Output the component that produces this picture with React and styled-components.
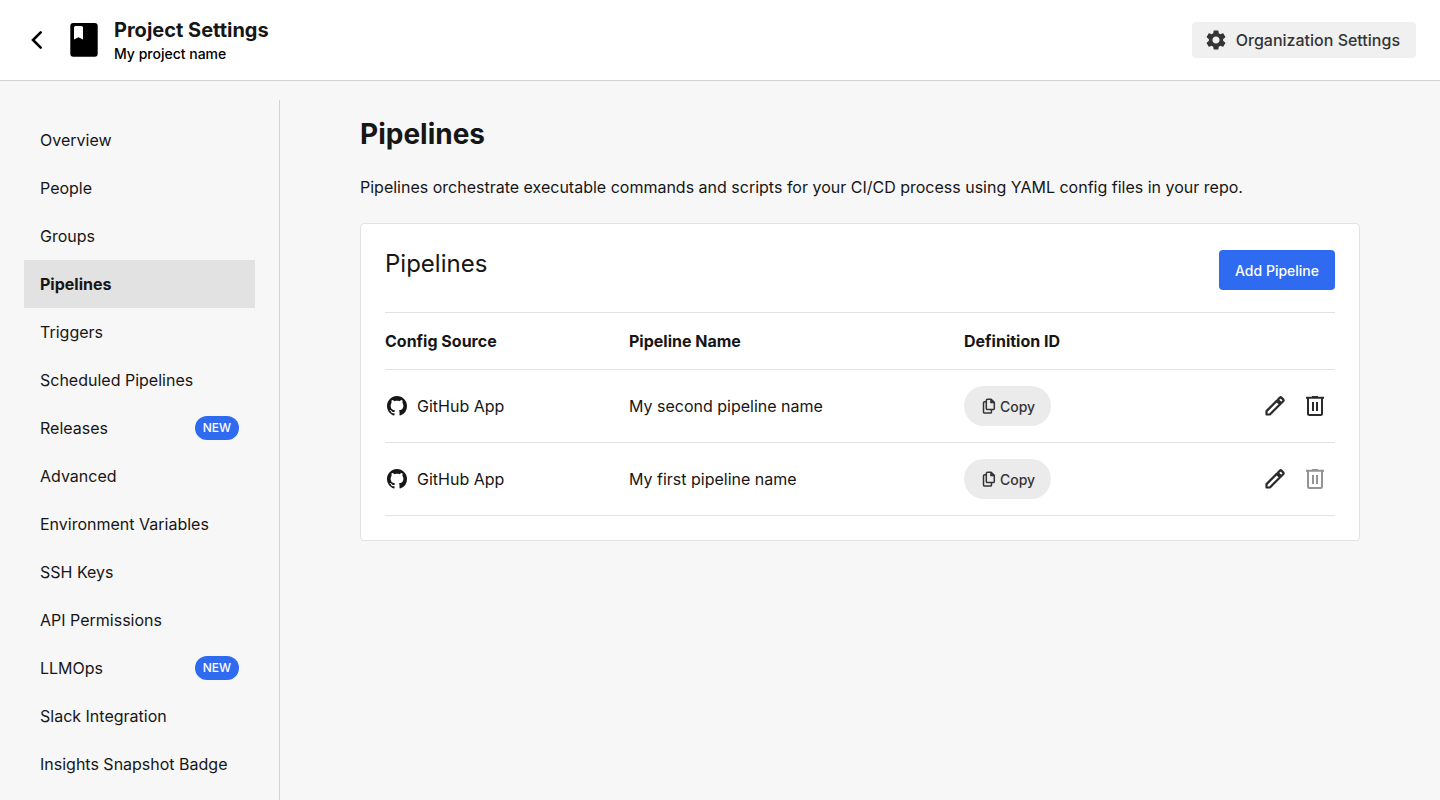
import React from "react";
import styled, { createGlobalStyle } from "styled-components";
import { MdSettings } from "react-icons/md";

const GlobalStyle = createGlobalStyle`
  *, *::before, *::after { box-sizing: border-box; }
  body {
    margin: 0;
    background: #f7f7f7;
    color: #161616;
    font-family: Inter, "Liberation Sans", sans-serif;
    font-size: 16px;
    line-height: 24px;
  }
  h1, h2, p, ul { margin: 0; padding: 0; }
  button { font-family: inherit; border: 0; padding: 0; cursor: pointer; }
  svg { display: block; flex-shrink: 0; }
`;

const Page = styled.div`
  min-height: 100vh;
  display: flex;
  flex-direction: column;
`;

const Header = styled.header`
  display: flex;
  align-items: center;
  min-height: 80px;
  padding: 0 24px;
  background: #fff;
  box-shadow: 0 1px 0 #d2d2d2;
`;

const BackButton = styled.button`
  width: 24px;
  height: 24px;
  margin-right: 16px;
  background: none;
  color: #000;
`;

const ProjectHeading = styled.div`
  display: flex;
  flex: 1;
  align-items: center;
  gap: 10px;
`;

const ProjectText = styled.div`
  padding-top: 4px;
`;

const ProjectTitle = styled.h2`
  font-size: 20px;
  line-height: 24px;
  font-weight: 700;
`;

const ProjectName = styled.p`
  color: #000;
  font-size: 14px;
  line-height: 24px;
  font-weight: 500;
`;

const OrgButton = styled.button`
  display: flex;
  align-items: center;
  gap: 8px;
  height: 36px;
  padding: 0 16px 0 12px;
  border-radius: 4px;
  background: #f0f0f0;
  color: #343434;
  font-size: 16px;
  font-weight: 500;
`;

const Body = styled.div`
  flex: 1;
  display: flex;
`;

const Sidebar = styled.nav`
  flex: 0 0 280px;
  margin-top: 20px;
  padding: 16px 24px 12px;
  border-right: 1px solid #d2d2d2;
`;

const NavList = styled.ul`
  list-style: none;
`;

const NavLink = styled.a`
  display: flex;
  align-items: center;
  justify-content: space-between;
  height: 48px;
  padding: 0 16px;
  background: ${(p) => (p.$active ? "#e2e2e2" : "transparent")};
  color: inherit;
  font-weight: ${(p) => (p.$active ? 700 : 400)};
  text-decoration: none;
`;

const Badge = styled.span`
  padding: 0 8px;
  border-radius: 12px;
  background: #2f6bf0;
  color: #fff;
  font-size: 12px;
  line-height: 24px;
  font-weight: 500;
`;

const Main = styled.main`
  flex: 1;
  min-width: 0;
  padding: 36px 80px;
`;

const PageTitle = styled.h1`
  font-size: 28px;
  line-height: 36px;
  font-weight: 700;
`;

const Description = styled.p`
  margin: 23px 0 24px;
`;

const Card = styled.section`
  padding: 24px;
  border: 1px solid #e2e2e2;
  border-radius: 4px;
  background: #fff;
`;

const CardHeader = styled.div`
  display: flex;
  align-items: flex-start;
  justify-content: space-between;
  padding: 2px 0 22px;
`;

const CardTitle = styled.h2`
  font-size: 24px;
  line-height: 28px;
  font-weight: 400;
`;

const PrimaryButton = styled.button`
  height: 40px;
  padding: 0 16px;
  border-radius: 4px;
  background: #2f6bf0;
  color: #fff;
  font-size: 14px;
  font-weight: 500;
`;

const Table = styled.table`
  width: 100%;
  border-collapse: separate;
  border-spacing: 0;
  table-layout: fixed;
`;

const HeadCell = styled.th`
  width: ${(p) => p.$width || "auto"};
  height: 58px;
  padding: 0;
  border: solid #e2e2e2;
  border-width: 1px 0;
  font-weight: 700;
  text-align: left;
`;

const Cell = styled.td`
  height: 73px;
  padding: 0;
  border-bottom: 1px solid #e2e2e2;
`;

const Source = styled.div`
  display: flex;
  align-items: center;
  gap: 8px;
`;

const CopyButton = styled.button`
  display: flex;
  align-items: center;
  gap: 2px;
  height: 40px;
  padding: 0 16px;
  border-radius: 20px;
  background: #ebebeb;
  color: #343434;
  font-size: 14px;
  font-weight: 500;
`;

const Actions = styled.div`
  display: flex;
  justify-content: flex-end;
  gap: 16px;
  padding-right: 8px;
`;

const IconButton = styled.button`
  width: 24px;
  height: 24px;
  background: none;
  color: #2b2b2b;
  &:disabled { color: #949494; cursor: default; }
`;

const ChevronIcon = () => (
  <svg width="24" height="24" viewBox="0 0 24 24" fill="none" stroke="currentColor" strokeWidth="2.600" strokeLinecap="round" strokeLinejoin="miter">
    <path d="M16.700 4.300 9 12l7.700 7.700" />
  </svg>
);

const BookIcon = () => (
  <svg width="40" height="40" viewBox="0 0 40 40">
    <path fillRule="evenodd" d="M9.300 3h21.400a3 3 0 0 1 3 3v27.700a3 3 0 0 1-3 3H9.300a3 3 0 0 1-3-3V6A3 3 0 0 1 9.300 3zM11.500 6A1.500 1.500 0 0 0 10 7.500v12l4.500-2.200 4.500 2.200v-12A1.500 1.500 0 0 0 17.500 6z" />
  </svg>
);

const GitHubIcon = () => (
  <svg width="24" height="24" viewBox="0 0 24 24" fill="currentColor">
    <path transform="translate(2 2) scale(1.25)" d="M8 0C3.580 0 0 3.580 0 8c0 3.540 2.290 6.530 5.470 7.590.4.070.55-.17.55-.38 0-.19-.01-.82-.01-1.490-2.010.37-2.530-.49-2.690-.94-.09-.23-.48-.94-.82-1.130-.28-.15-.68-.52-.01-.53.63-.01 1.080.58 1.230.82.72 1.210 1.870.87 2.330.66.07-.52.28-.87.51-1.070-1.780-.2-3.640-.89-3.640-3.950 0-.87.31-1.590.82-2.150-.08-.2-.36-1.020.08-2.120 0 0 .67-.21 2.200.82.64-.18 1.320-.27 2-.27s1.360.09 2 .27c1.530-1.040 2.200-.82 2.200-.82.44 1.100.16 1.920.08 2.120.51.56.82 1.270.82 2.150 0 3.070-1.870 3.750-3.650 3.950.29.25.54.73.54 1.480 0 1.070-.01 1.930-.01 2.200 0 .21.15.46.55.38A8.010 8.010 0 0 0 16 8c0-4.420-3.580-8-8-8z" />
  </svg>
);

const CopyIcon = () => (
  <svg width="18" height="18" viewBox="0 0 18 18" fill="none" stroke="currentColor" strokeWidth="1.500" strokeLinejoin="round">
    <path d="M7.500 2.200h3.600L14.300 5.400v6a1.200 1.200 0 0 1-1.200 1.200H7.500a1.200 1.200 0 0 1-1.200-1.200v-8a1.200 1.200 0 0 1 1.200-1.200z" />
    <path d="M10.600 2.400v3.500h3.500z" fill="currentColor" strokeWidth=".8" />
    <path d="M6 4.700H4.700a1.200 1.200 0 0 0-1.200 1.200v9a1.200 1.200 0 0 0 1.200 1.200h5.600a1.200 1.200 0 0 0 1.200-1.200v-2" />
  </svg>
);

const PencilIcon = () => (
  <svg width="24" height="24" viewBox="0 0 24 24" fill="none" stroke="currentColor" strokeWidth="2.200" strokeLinejoin="round">
    <path d="M13.700 6.900 3.500 17.100v3.400h3.400L17.100 10.300z" />
    <path d="m14.800 5.800 2.200-2.200a1 1 0 0 1 1.400 0l2 2a1 1 0 0 1 0 1.400l-2.200 2.200z" />
  </svg>
);

const TrashIcon = () => (
  <svg width="24" height="24" viewBox="0 0 24 24" fill="none" stroke="currentColor" strokeWidth="2">
    <path d="M3 3.800h18M5 4v15.500a1.500 1.500 0 0 0 1.500 1.500h11a1.500 1.500 0 0 0 1.500-1.500V4" />
    <path d="M10 8v9M14 8v9" />
    <path d="M9 3h6" />
  </svg>
);

const navItems = [
  { label: "Overview" },
  { label: "People" },
  { label: "Groups" },
  { label: "Pipelines", active: true },
  { label: "Triggers" },
  { label: "Scheduled Pipelines" },
  { label: "Releases", isNew: true },
  { label: "Advanced" },
  { label: "Environment Variables" },
  { label: "SSH Keys" },
  { label: "API Permissions" },
  { label: "LLMOps", isNew: true },
  { label: "Slack Integration" },
  { label: "Insights Snapshot Badge" },
];

const pipelines = [
  { source: "GitHub App", name: "My second pipeline name", removable: true },
  { source: "GitHub App", name: "My first pipeline name", removable: false },
];

export default function App() {
  return (
    <Page>
      <GlobalStyle />
      <Header>
        <BackButton aria-label="Back"><ChevronIcon /></BackButton>
        <ProjectHeading>
          <BookIcon />
          <ProjectText>
            <ProjectTitle>Project Settings</ProjectTitle>
            <ProjectName>My project name</ProjectName>
          </ProjectText>
        </ProjectHeading>
        <OrgButton>
          <MdSettings size={24} />
          Organization Settings
        </OrgButton>
      </Header>
      <Body>
        <Sidebar aria-label="Project settings">
          <NavList>
            {navItems.map((item) => (
              <li key={item.label}>
                <NavLink href="#" $active={item.active} aria-current={item.active ? "page" : undefined}>
                  {item.label}
                  {item.isNew && <Badge>NEW</Badge>}
                </NavLink>
              </li>
            ))}
          </NavList>
        </Sidebar>
        <Main>
          <PageTitle>Pipelines</PageTitle>
          <Description>
            Pipelines orchestrate executable commands and scripts for your CI/CD process using YAML config files in your repo.
          </Description>
          <Card>
            <CardHeader>
              <CardTitle>Pipelines</CardTitle>
              <PrimaryButton>Add Pipeline</PrimaryButton>
            </CardHeader>
            <Table>
              <thead>
                <tr>
                  <HeadCell $width="244px">Config Source</HeadCell>
                  <HeadCell $width="335px">Pipeline Name</HeadCell>
                  <HeadCell>Definition ID</HeadCell>
                  <HeadCell $width="120px" aria-label="Actions" />
                </tr>
              </thead>
              <tbody>
                {pipelines.map((pipeline) => (
                  <tr key={pipeline.name}>
                    <Cell>
                      <Source>
                        <GitHubIcon />
                        {pipeline.source}
                      </Source>
                    </Cell>
                    <Cell>{pipeline.name}</Cell>
                    <Cell>
                      <CopyButton>
                        <CopyIcon />
                        Copy
                      </CopyButton>
                    </Cell>
                    <Cell>
                      <Actions>
                        <IconButton aria-label={`Edit ${pipeline.name}`}><PencilIcon /></IconButton>
                        <IconButton aria-label={`Delete ${pipeline.name}`} disabled={!pipeline.removable}><TrashIcon /></IconButton>
                      </Actions>
                    </Cell>
                  </tr>
                ))}
              </tbody>
            </Table>
          </Card>
        </Main>
      </Body>
    </Page>
  );
}
